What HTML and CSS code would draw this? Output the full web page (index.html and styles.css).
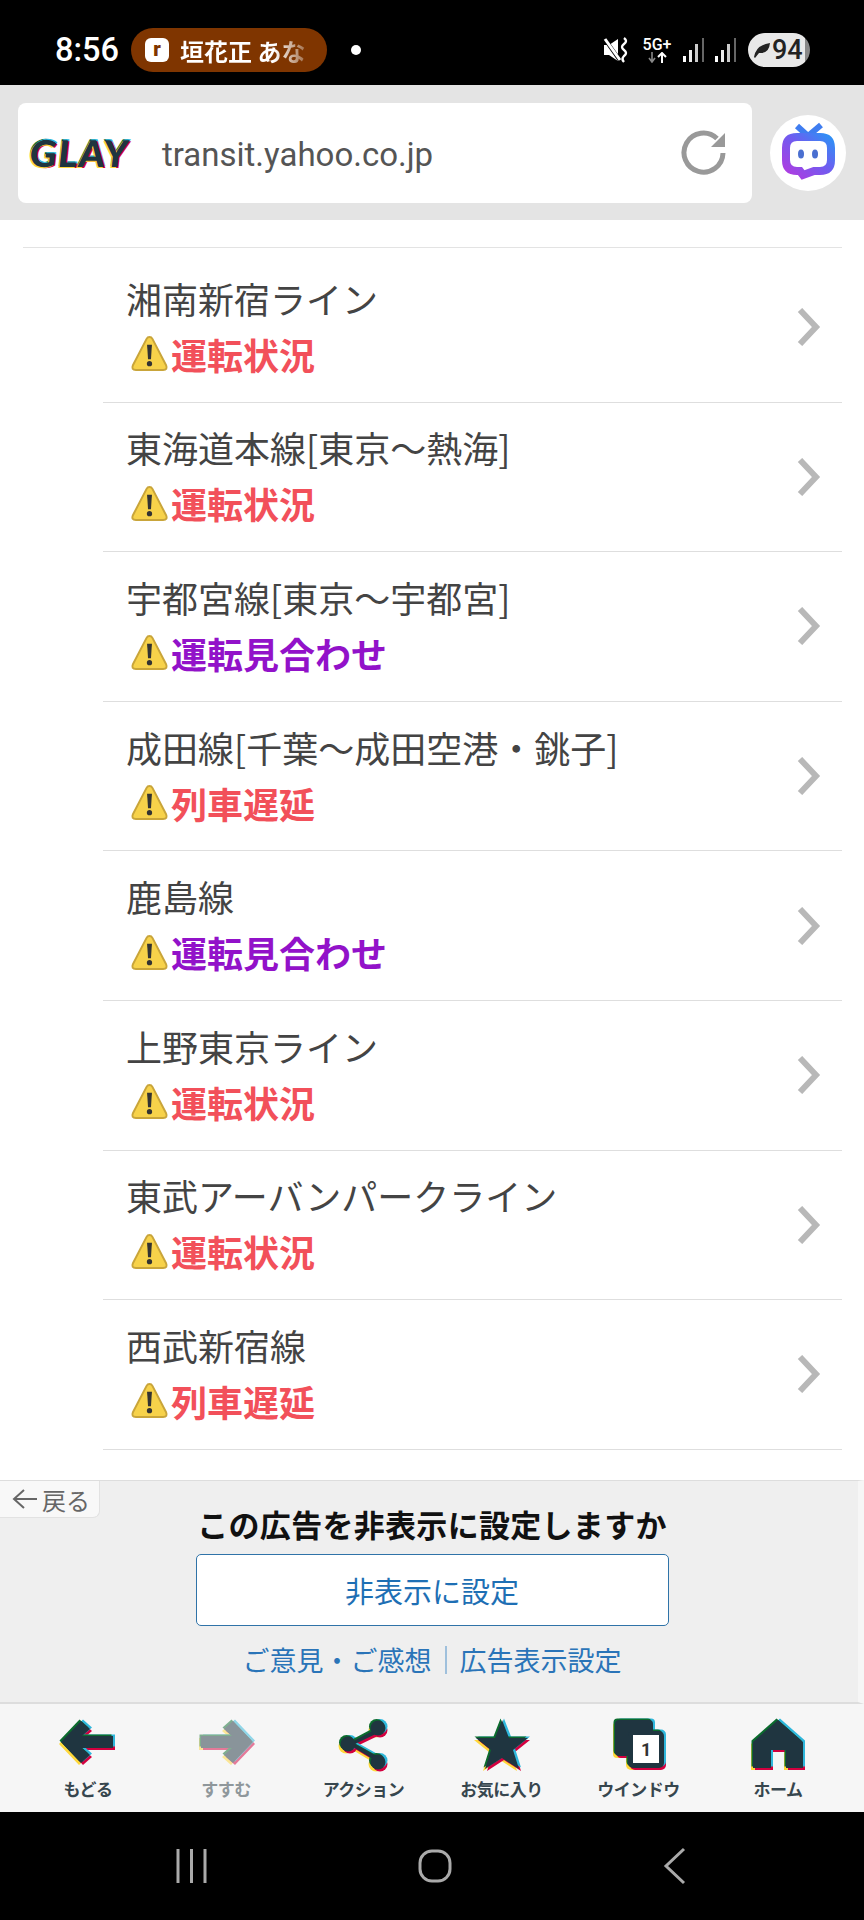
FILE: index.html
```html
<!DOCTYPE html>
<html lang="ja">
<head>
<meta charset="UTF-8">
<meta name="viewport" content="width=device-width, initial-scale=1.0">
<title>運行情報</title>
<link rel="stylesheet" href="styles.css">
</head>
<body>
<svg class="defs" width="0" height="0" aria-hidden="true">
    <defs>
        <symbol id="i-warn" viewBox="0 0 40 40">
            <path d="M20 3 Q22 3 23 5 L37 32 Q39 37 34 37 H6 Q1 37 3 32 L17 5 Q18 3 20 3 Z" fill="#f7d24a" stroke="#c9a53a" stroke-width="2"/>
            <path d="M17.5 11 H22.5 L21.5 26 H18.5 Z" fill="#333"/>
            <circle cx="20" cy="30.5" r="2.7" fill="#333"/>
        </symbol>
        <symbol id="i-chevron" viewBox="0 0 26 38">
            <path d="M3 2 L19 19 L3 36" fill="none" stroke="#b8b8b8" stroke-width="6"/>
        </symbol>
        <symbol id="i-back" viewBox="0 0 60 56">
            <path d="M3 25 L23 4 L32 12 L24 19 H55 V31 H24 L32 38 L23 46 Z"/>
        </symbol>
        <symbol id="i-forward" viewBox="0 0 60 56">
            <path d="M57 25 L37 4 L28 12 L36 19 H5 V31 H36 L28 38 L37 46 Z"/>
        </symbol>
        <symbol id="i-share" viewBox="0 0 60 56">
            <path d="M44 11 L14 27 L44 45 L46 41 L21 27 L46 15 Z"/>
            <circle cx="44" cy="11" r="7.5"/>
            <circle cx="14" cy="27" r="7.5"/>
            <circle cx="44" cy="45" r="7.5"/>
        </symbol>
        <symbol id="i-star" viewBox="0 0 60 56">
            <path d="M30 3 L37 21 L56 21 L41 33 L47 52 L30 41 L13 52 L19 33 L4 21 L23 21 Z"/>
        </symbol>
        <symbol id="i-window" viewBox="0 0 60 56">
            <rect x="6" y="3" width="38" height="36" rx="4"/>
            <rect x="19" y="14" width="36" height="37" rx="5"/>
        </symbol>
        <symbol id="i-home" viewBox="0 0 60 56">
            <path d="M30 3 L55 25 V51 H38 V33 H23 V51 H5 V25 Z"/>
        </symbol>
        <linearGradient id="bot-grad" x1="0" y1="1" x2="1" y2="0">
            <stop offset="0" stop-color="#b13be0"/>
            <stop offset="0.55" stop-color="#6f5cf0"/>
            <stop offset="1" stop-color="#2f8ff5"/>
        </linearGradient>
    </defs>
</svg>

<div class="page">
    <header class="status-bar">
        <span class="clock">8:56</span>
        <div class="now-playing">
            <span class="radio-mark">r</span>
            <span class="now-text">垣花正 あな</span>
        </div>
        <span class="dot"></span>
        <div class="status-right">
            <svg class="mute" width="26" height="26" viewBox="0 0 26 26">
                <path d="M1 8 H6 L15 2 V24 L6 18 H1 Z" fill="#fff"/>
                <path d="M1 1 L18 25" stroke="#000" stroke-width="4"/>
                <path d="M2 2 L17 23" stroke="#fff" stroke-width="3"/>
                <path d="M21 1 Q25 4 21 7 Q17 10 21 13 Q25 16 21 19 Q18 22 21 25" fill="none" stroke="#fff" stroke-width="2.4"/>
            </svg>
            <div class="net">
                <span class="net-label">5G+</span>
                <svg width="20" height="11" viewBox="0 0 20 11">
                    <path d="M5 0 V9 M2 6 L5 10 L8 6" fill="none" stroke="#888" stroke-width="1.6"/>
                    <path d="M15 11 V2 M11 5 L15 1 L19 5" fill="none" stroke="#fff" stroke-width="2"/>
                </svg>
            </div>
            <svg class="signal" width="22" height="24" viewBox="0 0 22 24">
                <rect x="0" y="18" width="3" height="6" fill="#fff"/>
                <rect x="6" y="12" width="3" height="12" fill="#eee"/>
                <rect x="12" y="6" width="3" height="18" fill="#ccc"/>
                <rect x="19" y="0" width="2" height="24" fill="#666"/>
            </svg>
            <svg class="signal" width="22" height="24" viewBox="0 0 22 24">
                <rect x="0" y="18" width="3" height="6" fill="#fff"/>
                <rect x="6" y="12" width="3" height="12" fill="#eee"/>
                <rect x="12" y="6" width="3" height="18" fill="#ccc"/>
                <rect x="19" y="0" width="2" height="24" fill="#666"/>
            </svg>
            <div class="battery">
                <svg width="18" height="18" viewBox="0 0 18 18">
                    <path d="M1 16 Q3 4 17 2 Q16 13 6 12 L2 17 Z" fill="#222"/>
                </svg>
                <span>94</span>
            </div>
        </div>
    </header>

    <div class="browser-bar">
        <div class="url-box">
            <span class="logo">GLAY</span>
            <span class="url">transit.yahoo.co.jp</span>
            <svg class="reload" width="50" height="50" viewBox="0 0 50 50">
                <path d="M37 10.5 A19.5 19.5 0 1 0 43 25" fill="none" stroke="#999" stroke-width="5"/>
                <path d="M45 5 V19 H31 Z" fill="#999"/>
            </svg>
        </div>
        <div class="bot">
            <svg width="76" height="76" viewBox="0 0 76 76">
                <path d="M27 11 L38 21 L51 10" fill="none" stroke="#3f7df0" stroke-width="6"/>
                <path d="M27 22 H50 Q61 22 61 33 V45 Q61 56 50 56 H44 L33 60 L30 56 H27 Q16 56 16 45 V33 Q16 22 27 22 Z" fill="#fff" stroke="url(#bot-grad)" stroke-width="8"/>
                <ellipse cx="31" cy="39" rx="3" ry="4.5" fill="#4a6fd0"/>
                <ellipse cx="45" cy="39" rx="3" ry="4.5" fill="#4a6fd0"/>
            </svg>
        </div>
    </div>

    <main class="content">
        <ul class="line-list">
            <li class="line-row">
                <div class="line-info">
                    <div class="line-name">湘南新宿ライン</div>
                    <div class="line-state state-red"><svg class="warn"><use href="#i-warn"/></svg>運転状況</div>
                </div>
                <svg class="chevron"><use href="#i-chevron"/></svg>
            </li>
            <li class="line-row">
                <div class="line-info">
                    <div class="line-name">東海道本線[東京～熱海]</div>
                    <div class="line-state state-red"><svg class="warn"><use href="#i-warn"/></svg>運転状況</div>
                </div>
                <svg class="chevron"><use href="#i-chevron"/></svg>
            </li>
            <li class="line-row">
                <div class="line-info">
                    <div class="line-name">宇都宮線[東京～宇都宮]</div>
                    <div class="line-state state-purple"><svg class="warn"><use href="#i-warn"/></svg>運転見合わせ</div>
                </div>
                <svg class="chevron"><use href="#i-chevron"/></svg>
            </li>
            <li class="line-row">
                <div class="line-info">
                    <div class="line-name">成田線[千葉～成田空港・銚子]</div>
                    <div class="line-state state-red"><svg class="warn"><use href="#i-warn"/></svg>列車遅延</div>
                </div>
                <svg class="chevron"><use href="#i-chevron"/></svg>
            </li>
            <li class="line-row">
                <div class="line-info">
                    <div class="line-name">鹿島線</div>
                    <div class="line-state state-purple"><svg class="warn"><use href="#i-warn"/></svg>運転見合わせ</div>
                </div>
                <svg class="chevron"><use href="#i-chevron"/></svg>
            </li>
            <li class="line-row">
                <div class="line-info">
                    <div class="line-name">上野東京ライン</div>
                    <div class="line-state state-red"><svg class="warn"><use href="#i-warn"/></svg>運転状況</div>
                </div>
                <svg class="chevron"><use href="#i-chevron"/></svg>
            </li>
            <li class="line-row">
                <div class="line-info">
                    <div class="line-name">東武アーバンパークライン</div>
                    <div class="line-state state-red"><svg class="warn"><use href="#i-warn"/></svg>運転状況</div>
                </div>
                <svg class="chevron"><use href="#i-chevron"/></svg>
            </li>
            <li class="line-row">
                <div class="line-info">
                    <div class="line-name">西武新宿線</div>
                    <div class="line-state state-red"><svg class="warn"><use href="#i-warn"/></svg>列車遅延</div>
                </div>
                <svg class="chevron"><use href="#i-chevron"/></svg>
            </li>
        </ul>
    </main>

    <section class="ad-panel">
        <a class="ad-back">
            <svg width="26" height="22" viewBox="0 0 26 22"><path d="M25 11 H3 M12 2 L2 11 L12 20" fill="none" stroke="#666" stroke-width="2"/></svg>
            戻る
        </a>
        <div class="ad-title">この広告を非表示に設定しますか</div>
        <button class="ad-button" type="button">非表示に設定</button>
        <div class="ad-links">
            <a>ご意見・ご感想</a>
            <span class="ad-sep"></span>
            <a>広告表示設定</a>
        </div>
    </section>

    <nav class="tool-bar">
        <div class="tool">
            <svg class="tool-icon" viewBox="0 0 60 56">
                <use href="#i-back" class="ink-y"/><use href="#i-back" class="ink-r"/><use href="#i-back" class="ink-c"/><use href="#i-back" class="ink-g"/><use href="#i-back" class="ink-k"/>
            </svg>
            <span>もどる</span>
        </div>
        <div class="tool tool-off">
            <svg class="tool-icon" viewBox="0 0 60 56">
                <use href="#i-forward" class="ink-y"/><use href="#i-forward" class="ink-r"/><use href="#i-forward" class="ink-c"/><use href="#i-forward" class="ink-g"/><use href="#i-forward" class="ink-k"/>
            </svg>
            <span>すすむ</span>
        </div>
        <div class="tool">
            <svg class="tool-icon" viewBox="0 0 60 56">
                <use href="#i-share" class="ink-y"/><use href="#i-share" class="ink-r"/><use href="#i-share" class="ink-c"/><use href="#i-share" class="ink-g"/><use href="#i-share" class="ink-k"/>
            </svg>
            <span>アクション</span>
        </div>
        <div class="tool">
            <svg class="tool-icon" viewBox="0 0 60 56">
                <use href="#i-star" class="ink-y"/><use href="#i-star" class="ink-r"/><use href="#i-star" class="ink-c"/><use href="#i-star" class="ink-g"/><use href="#i-star" class="ink-k"/>
            </svg>
            <span>お気に入り</span>
        </div>
        <div class="tool">
            <svg class="tool-icon" viewBox="0 0 60 56">
                <use href="#i-window" class="ink-y"/><use href="#i-window" class="ink-r"/><use href="#i-window" class="ink-c"/><use href="#i-window" class="ink-g"/><use href="#i-window" class="ink-k"/>
                <rect x="24" y="18" width="26" height="28" fill="#fff"/>
                <text x="37" y="39" class="window-count">1</text>
            </svg>
            <span>ウインドウ</span>
        </div>
        <div class="tool">
            <svg class="tool-icon" viewBox="0 0 60 56">
                <use href="#i-home" class="ink-y"/><use href="#i-home" class="ink-r"/><use href="#i-home" class="ink-c"/><use href="#i-home" class="ink-g"/><use href="#i-home" class="ink-k"/>
            </svg>
            <span>ホーム</span>
        </div>
    </nav>

    <footer class="nav-bar">
        <svg width="31" height="34" viewBox="0 0 31 34">
            <path d="M2 0 V34 M15.5 0 V34 M29 0 V34" stroke="#aaa" stroke-width="3"/>
        </svg>
        <svg width="34" height="34" viewBox="0 0 34 34">
            <rect x="2" y="2" width="30" height="30" rx="12" fill="none" stroke="#aaa" stroke-width="3"/>
        </svg>
        <svg width="24" height="38" viewBox="0 0 24 38">
            <path d="M21 2 L3 19 L21 36" fill="none" stroke="#aaa" stroke-width="3"/>
        </svg>
    </footer>
</div>
</body>
</html>
```

FILE: styles.css
```css
* {
    box-sizing: border-box;
}
body {
    margin: 0;
    background: #fff;
    font-family: "Noto Sans CJK JP", "Noto Sans", sans-serif;
}
.defs {
    position: absolute;
}
.page {
    width: 864px;
    height: 1920px;
    display: flex;
    flex-direction: column;
    overflow: hidden;
}

/* status bar */
.status-bar {
    height: 85px;
    flex: none;
    background: #000;
    color: #fff;
    display: flex;
    align-items: center;
    padding: 15px 54px 0 55px;
}
.clock {
    font-family: Roboto, sans-serif;
    font-size: 32.5px;
    font-weight: 500;
    width: 76px;
}
.now-playing {
    width: 196px;
    height: 44px;
    background: #7f3500;
    border-radius: 22px;
    display: flex;
    align-items: center;
    gap: 11px;
    padding-left: 14px;
    overflow: hidden;
}
.radio-mark {
    width: 24px;
    height: 24px;
    flex: none;
    background: #fff;
    border-radius: 6px;
    color: #7f3500;
    font-family: Roboto, sans-serif;
    font-size: 20px;
    font-weight: 900;
    line-height: 22px;
    text-align: center;
}
.now-text {
    font-size: 24px;
    font-weight: 700;
    white-space: nowrap;
    background: linear-gradient(90deg, #fff 75%, #a5734f 100%);
    -webkit-background-clip: text;
    background-clip: text;
    color: transparent;
}
.dot {
    width: 10px;
    height: 10px;
    border-radius: 50%;
    background: #fff;
    margin-left: 24px;
}
.status-right {
    margin-left: auto;
    display: flex;
    align-items: center;
}
.mute {
    margin-right: 13px;
}
.net {
    width: 30px;
    margin-right: 11px;
    display: flex;
    flex-direction: column;
    align-items: center;
}
.net-label {
    font-family: Roboto, sans-serif;
    font-size: 16px;
    font-weight: 500;
    line-height: 15px;
}
.signal {
    margin-right: 10px;
}
.battery {
    width: 62px;
    height: 34px;
    margin-left: 1px;
    background: linear-gradient(90deg, #e8e8e8 92%, #888 92%);
    border-radius: 17px;
    color: #222;
    display: flex;
    align-items: center;
    padding-left: 5px;
    gap: 1px;
    font-family: Roboto, sans-serif;
    font-size: 27px;
    font-weight: 500;
}

/* browser bar */
.browser-bar {
    height: 135px;
    flex: none;
    background: #e4e4e4;
    display: flex;
    align-items: center;
    padding: 0 10px 0 18px;
    gap: 18px;
}
.url-box {
    width: 734px;
    height: 100px;
    background: #fff;
    border-radius: 8px;
    display: flex;
    align-items: center;
    padding: 0 22px 0 12px;
}
.logo {
    width: 132px;
    font-family: Lato, sans-serif;
    font-size: 37px;
    font-weight: 900;
    letter-spacing: 1.5px;
    color: #1f3540;
    transform: skewX(-6deg);
    text-shadow: -1px 1px 0 #ffd83a, 1.5px 1px 0 #d3003f, 1px -1px 0 #2fb7dc, -1px -1px 0 #0b6b2d;
}
.url {
    font-family: Roboto, sans-serif;
    font-size: 33px;
    padding-top: 3px;
    color: #555;
}
.reload {
    margin-left: auto;
}
.bot {
    width: 76px;
    height: 76px;
    background: #fff;
    border-radius: 50%;
}

/* line list */
.content {
    flex: 1;
    padding: 27px 22px 0 23px;
}
.line-list {
    list-style: none;
    margin: 0;
    padding: 5px 0 0 80px;
    border-top: 1px solid #e3e3e3;
}
.line-row {
    height: 149.6px;
    border-bottom: 1px solid #dedede;
    display: flex;
    align-items: center;
    justify-content: space-between;
    padding: 0 19px 0 23px;
}
.line-info {
    padding-bottom: 3px;
}
.line-name {
    font-size: 36px;
    line-height: 46px;
    color: #444;
    white-space: nowrap;
}
.line-state {
    display: flex;
    align-items: center;
    gap: 2px;
    margin-top: 10px;
    font-size: 36px;
    line-height: 46px;
    font-weight: 700;
}
.warn {
    flex: none;
    width: 39px;
    height: 39px;
    margin-left: 4px;
}
.chevron {
    width: 26px;
    height: 38px;
}
.state-red {
    color: #f2505a;
}
.state-purple {
    color: #9212c9;
}

/* ad panel */
.ad-panel {
    position: relative;
    height: 224px;
    flex: none;
    background: #efefef;
    border-top: 1px solid #ddd;
    border-bottom: 2px solid #ddd;
    border-right: 6px solid #f6f6f6;
    display: flex;
    flex-direction: column;
    align-items: center;
    padding: 22px 0 0 6px;
}
.ad-back {
    position: absolute;
    top: 0;
    left: 0;
    width: 100px;
    height: 37px;
    background: #f8f8f8;
    border-right: 1px solid #e2e2e2;
    border-bottom: 1px solid #e2e2e2;
    border-bottom-right-radius: 7px;
    color: #666;
    font-size: 24px;
    line-height: 35px;
    padding-left: 12px;
    display: flex;
    align-items: center;
    gap: 4px;
    white-space: nowrap;
}
.ad-title {
    font-size: 31px;
    line-height: 42px;
    font-weight: 700;
    color: #111;
    letter-spacing: 0.3px;
    white-space: nowrap;
}
.ad-button {
    width: 473px;
    height: 72px;
    margin-top: 9px;
    background: #fff;
    border: 1.5px solid #2f73a8;
    border-radius: 5px;
    color: #1e6fb4;
    font-family: inherit;
    font-size: 29px;
}
.ad-links {
    display: flex;
    align-items: center;
    margin-top: 16px;
    color: #2a74b8;
    font-size: 27px;
    line-height: 36px;
}
.ad-sep {
    width: 2px;
    height: 28px;
    background: #9fc0dc;
    margin: 0 13px;
}

/* bottom tool bar */
.tool-bar {
    height: 108px;
    flex: none;
    background: #f6f6f6;
    display: grid;
    grid-template-columns: 138px 138px 137px 139px 135px 144px;
    padding: 13px 0 0 19px;
}
.tool {
    display: flex;
    flex-direction: column;
    align-items: center;
    font-size: 17px;
    font-weight: 700;
    letter-spacing: -0.5px;
    color: #37464e;
    line-height: 24px;
}
.tool-off {
    color: #8f979b;
}
.tool-off .tool-icon {
    opacity: 0.5;
}
.tool-icon {
    width: 60px;
    height: 56px;
    margin-bottom: 4px;
}
.ink-y {
    fill: #ffd83a;
    transform: translate(-2px, 2px);
}
.ink-r {
    fill: #d3003f;
    transform: translate(2px, 2px);
}
.ink-c {
    fill: #2fb7dc;
    transform: translate(2px, -1.5px);
}
.ink-g {
    fill: #0b6b2d;
    transform: translate(-1.5px, -1.5px);
}
.ink-k {
    fill: #1f3540;
}
.window-count {
    font-family: Roboto, sans-serif;
    font-size: 18px;
    font-weight: 700;
    text-anchor: middle;
    fill: #333;
}

/* android nav */
.nav-bar {
    height: 108px;
    flex: none;
    background: #000;
    display: flex;
    align-items: center;
    justify-content: space-between;
    padding: 0 177px 0 176px;
}
```
